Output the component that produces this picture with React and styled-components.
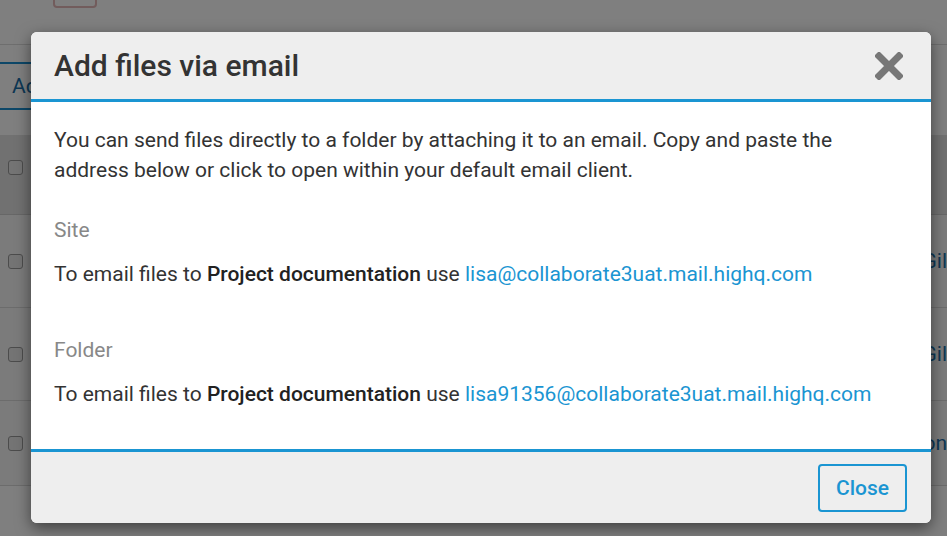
import React from "react";
import styled, { createGlobalStyle } from "styled-components";

const Global = createGlobalStyle`
  html, body { margin: 0; padding: 0; }
  body {
    width: 947px; height: 536px; overflow: hidden;
    font-family: Roboto, "Liberation Sans", Arial, sans-serif;
    background: #ffffff;
  }
  #root { width: 947px; height: 536px; position: relative; }
`;

const Page = styled.div`
  width: 947px;
  height: 536px;
  background: #ffffff;
  display: flex;
  flex-direction: column;
  overflow: hidden;
`;

const TopBar = styled.div`
  height: 45px;
  border-bottom: 1px solid #dcdcdc;
  display: flex;
  align-items: flex-start;
  padding-left: 53px;
  box-sizing: border-box;
`;

const TopButton = styled.div`
  width: 44px;
  height: 16px;
  margin-top: -8px;
  border: 2px solid #e4b8b8;
  border-radius: 4px;
  box-sizing: border-box;
`;

const TabRow = styled.div`
  height: 90px;
  display: flex;
  align-items: flex-start;
  padding-top: 17px;
  box-sizing: border-box;
`;

const Tab = styled.div`
  height: 48px;
  width: 120px;
  border-top: 2px solid #1a8fd0;
  border-bottom: 2px solid #1a8fd0;
  box-sizing: border-box;
  color: #1a6fa8;
  font-size: 21px;
  padding-left: 12px;
  display: flex;
  align-items: center;
`;

const HeadRow = styled.div`
  height: 80px;
  background: #e2e2e2;
  display: flex;
  align-items: flex-start;
  padding: 25px 0 0 8px;
  border-bottom: 1px solid #cfcfcf;
  box-sizing: border-box;
`;

const Row = styled.div`
  height: ${(p) => p.$h || 93}px;
  flex: none;
  display: flex;
  align-items: center;
  justify-content: space-between;
  padding-left: 8px;
  border-bottom: 1px solid #d8d8d8;
  box-sizing: border-box;
  background: #f6f6f6;
`;

const Check = styled.div`
  width: 15px;
  height: 15px;
  border: 1px solid #999;
  border-radius: 3px;
  background: #e8e8e8;
  box-sizing: border-box;
`;

const RowLink = styled.span`
  color: #1a6fa8;
  font-size: 21px;
  margin-right: 0;
`;

const Overlay = styled.div`
  position: absolute;
  inset: 0;
  background: rgba(0, 0, 0, 0.5);
`;

const Modal = styled.div`
  position: absolute;
  left: 31px;
  top: 32px;
  width: 900px;
  background: #ffffff;
  border-radius: 6px;
  box-shadow: 0 5px 15px rgba(0, 0, 0, 0.5);
  overflow: hidden;
  display: flex;
  flex-direction: column;
`;

const Header = styled.div`
  height: 70px;
  background: #eeeeee;
  border-bottom: 3px solid #1a95d2;
  box-sizing: border-box;
  display: flex;
  align-items: center;
  justify-content: space-between;
  padding: 0 27px 0 23px;
`;

const Title = styled.h2`
  margin: 0;
  font-size: 30px;
  font-weight: 500;
  color: #333333;
  line-height: 1;
`;

const CloseX = styled.button`
  border: 0;
  background: transparent;
  padding: 0;
  width: 30px;
  height: 30px;
  display: flex;
  align-items: center;
  justify-content: center;
  cursor: pointer;
`;

const Body = styled.div`
  padding: 23px 23px 40px;
  color: #333333;
  font-size: 21px;
  line-height: 30px;
`;

const Intro = styled.p`
  margin: 0;
`;

const Section = styled.div`
  margin-top: ${(p) => p.$gap}px;
`;

const Label = styled.div`
  color: #888888;
`;

const Line = styled.div`
  margin-top: 14px;
  b { font-weight: 500; color: #222; }
`;

const Mail = styled.a`
  color: #1a95d2;
  text-decoration: none;
`;

const Footer = styled.div`
  height: 74px;
  background: #eeeeee;
  border-top: 3px solid #1a95d2;
  box-sizing: border-box;
  display: flex;
  align-items: center;
  justify-content: flex-end;
  padding-right: 24px;
`;

const Button = styled.button`
  height: 48px;
  padding: 0 16px;
  border: 2px solid #1a95d2;
  border-radius: 4px;
  background: transparent;
  color: #1a95d2;
  font-family: inherit;
  font-size: 21px;
  font-weight: 500;
  cursor: pointer;
`;

export default function App() {
  return (
    <>
      <Global />
      <Page>
        <TopBar>
          <TopButton />
        </TopBar>
        <TabRow>
          <Tab>Add</Tab>
        </TabRow>
        <HeadRow>
          <Check />
        </HeadRow>
        <Row>
          <Check />
          <RowLink>Gil</RowLink>
        </Row>
        <Row>
          <Check />
          <RowLink>Gil</RowLink>
        </Row>
        <Row $h={85}>
          <Check />
          <RowLink>on</RowLink>
        </Row>
      </Page>
      <Overlay />
      <Modal>
        <Header>
          <Title>Add files via email</Title>
          <CloseX aria-label="Close">
            <svg width="28" height="28" viewBox="0 0 28 28">
              <path d="M4 4 L24 24 M24 4 L4 24" stroke="#777" strokeWidth="7" strokeLinecap="square" />
            </svg>
          </CloseX>
        </Header>
        <Body>
          <Intro>
            You can send files directly to a folder by attaching it to an email. Copy and paste the
            address below or click to open within your default email client.
          </Intro>
          <Section $gap={30}>
            <Label>Site</Label>
            <Line>
              To email files to <b>Project documentation</b> use{" "}
              <Mail href="#">lisa@collaborate3uat.mail.highq.com</Mail>
            </Line>
          </Section>
          <Section $gap={46}>
            <Label>Folder</Label>
            <Line>
              To email files to <b>Project documentation</b> use{" "}
              <Mail href="#">lisa91356@collaborate3uat.mail.highq.com</Mail>
            </Line>
          </Section>
        </Body>
        <Footer>
          <Button>Close</Button>
        </Footer>
      </Modal>
    </>
  );
}
